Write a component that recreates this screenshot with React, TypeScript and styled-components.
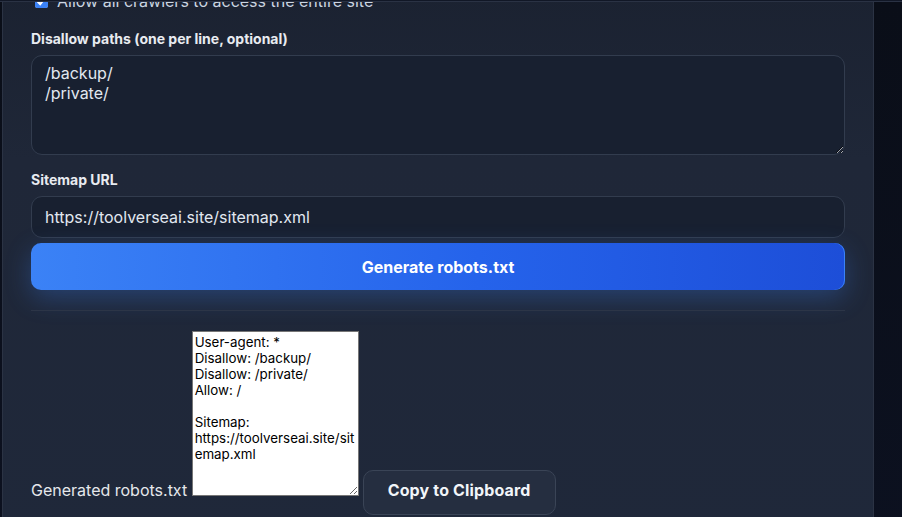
import React from "react";
import styled, { createGlobalStyle } from "styled-components";

const Global = createGlobalStyle`
  html, body { margin: 0; padding: 0; }
  body {
    background: linear-gradient(180deg, #0a0e18 0%, #0c1120 100%);
    font-family: Inter, "Noto Sans", sans-serif;
    min-height: 517px;
    overflow: hidden;
  }
`;

const TopEdge = styled.div`
  position: fixed;
  top: 0;
  left: 0;
  right: 0;
  height: 1px;
  border-bottom: 1px solid #2a3244;
  background: #111726;
  z-index: 5;
`;

const Page = styled.div`
  display: flex;
  padding-left: 2px;
`;

const Card = styled.section`
  width: 872px;
  margin-top: -9px;
  padding: 0 28px 40px;
  box-sizing: border-box;
  border-left: 1px solid #2b3344;
  border-right: 1px solid #2b3344;
  background: linear-gradient(180deg, #1b2231 0%, #1f2738 30%, #1f283a 100%);
  color: #e5e7eb;
`;

const CheckRow = styled.label`
  display: flex;
  align-items: center;
  height: 20px;
  font-size: 16px;
  color: #cbd5e1;
  gap: 9px;
  input {
    margin: 0 0 0 4px;
    width: 13px;
    height: 13px;
    accent-color: #3b82f6;
  }
`;

const FieldLabel = styled.div<{ $top: number }>`
  margin-top: ${(p) => p.$top}px;
  font-size: 14px;
  font-weight: 700;
  line-height: 20px;
  color: #e8ebf0;
`;

const fieldBase = `
  display: block;
  width: 100%;
  box-sizing: border-box;
  background: #182030;
  border: 1px solid #323c4e;
  border-radius: 11px;
  color: #e2e8f0;
  font-family: Inter, "Noto Sans", sans-serif;
  font-size: 16px;
  padding: 0 13px;
  outline: none;
`;

const PathsArea = styled.textarea`
  ${fieldBase}
  margin-top: 6px;
  height: 100px;
  padding-top: 8px;
  line-height: 19.5px;
  resize: vertical;
`;

const UrlInput = styled.input`
  ${fieldBase}
  margin-top: 6px;
  height: 42px;
`;

const GenerateButton = styled.button`
  display: block;
  width: 100%;
  height: 47px;
  margin-top: 5px;
  border: none;
  border-radius: 10px;
  background: linear-gradient(90deg, #3b82f6 0%, #2563eb 55%, #1d4ed8 100%);
  box-shadow: 0 8px 26px rgba(59, 130, 246, 0.3), inset -1px 0 0 #3b82f6;
  color: #ffffff;
  font-family: Inter, "Noto Sans", sans-serif;
  font-size: 16px;
  font-weight: 700;
  letter-spacing: 0;
`;

const Divider = styled.hr`
  margin: 20px 0 0;
  border: none;
  border-top: 1px solid #2c3547;
`;

const OutputLine = styled.div`
  margin-top: 20px;
  font-size: 16px;
  color: #e5e7eb;
`;

const OutputArea = styled.textarea`
  width: 167px;
  height: 165px;
  box-sizing: border-box;
  font-family: Inter, "Noto Sans", sans-serif;
  font-size: 13.33px;
  line-height: 16px;
  padding: 2px;
  margin: 0;
  border: 1px solid #767676;
  background: #ffffff;
  color: #000000;
  vertical-align: baseline;
`;

const CopyButton = styled.button`
  margin-left: 4px;
  height: 45px;
  padding: 0 24px 4px;
  border: 1px solid #3a4456;
  border-radius: 10px;
  background: #252e40;
  color: #f1f5f9;
  font-family: Inter, "Noto Sans", sans-serif;
  font-size: 16px;
  font-weight: 700;
  letter-spacing: 0.15px;
`;

const output = `User-agent: *
Disallow: /backup/
Disallow: /private/
Allow: /

Sitemap: https://toolverseai.site/sitemap.xml`;

export default function App() {
  return (
    <>
      <Global />
      <TopEdge />
      <Page>
        <Card>
          <CheckRow>
            <input type="checkbox" defaultChecked />
            <span>Allow all crawlers to access the entire site</span>
          </CheckRow>
          <FieldLabel $top={18}>Disallow paths (one per line, optional)</FieldLabel>
          <PathsArea defaultValue={"/backup/\n/private/"} />
          <FieldLabel $top={15}>Sitemap URL</FieldLabel>
          <UrlInput defaultValue="https://toolverseai.site/sitemap.xml" />
          <GenerateButton>Generate robots.txt</GenerateButton>
          <Divider />
          <OutputLine>
            Generated robots.txt <OutputArea readOnly value={output} />
            <CopyButton>Copy to Clipboard</CopyButton>
          </OutputLine>
        </Card>
      </Page>
    </>
  );
}
